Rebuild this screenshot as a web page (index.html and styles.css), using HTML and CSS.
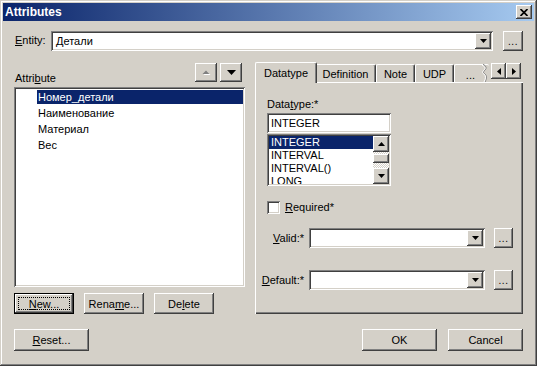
FILE: index.html
```html
<!DOCTYPE html>
<html lang="ru">
  <head>
    <meta charset="UTF-8" />
    <meta name="viewport" content="width=device-width, initial-scale=1" />
    <title>Attributes</title>
    <link rel="stylesheet" href="styles.css">
  </head>
  <body>
    <div class="dialog">
      <div class="titlebar">
        <span class="title">Attributes</span>
        <button class="btn close-btn" aria-label="Close">
          <svg width="8" height="7" viewBox="0 0 8 7"><path d="M0.5 0 L7.5 7 M7.5 0 L0.5 7" stroke="#000" stroke-width="1.7" /></svg>
        </button>
      </div>

      <div class="content">
        <!--—— entity ——-->
        <div class="entity-row">
          <span class="lbl entity-lbl"><u>E</u>ntity:</span>
          <div class="field combo">
            <span class="combo-text">Детали</span>
            <span class="btn drop-btn"><svg width="7" height="4" viewBox="0 0 7 4"><path d="M0 0h7L3.5 4z" /></svg></span>
          </div>
          <button class="btn dots-btn entity-dots">...</button>
        </div>

        <div class="main">
          <!--—— left: attribute list ——-->
          <div class="left">
            <div class="attr-head">
              <span class="lbl">Attri<u>b</u>ute</span>
              <div class="head-btns">
                <button class="btn head-btn" disabled>
                  <svg width="9" height="6" viewBox="0 0 9 6"><path d="M1.5 5h7L5 1.5z" fill="#fff" /><path d="M0.5 4h7L4 0.5z" fill="#808080" /></svg>
                </button>
                <button class="btn head-btn">
                  <svg width="9" height="5" viewBox="0 0 9 5"><path d="M0 0h9L4.5 5z" /></svg>
                </button>
              </div>
            </div>
            <div class="field attr-list">
              <div class="attr-item selected"><span>Номер_детали</span></div>
              <div class="attr-item"><span>Наименование</span></div>
              <div class="attr-item"><span>Материал</span></div>
              <div class="attr-item"><span>Вес</span></div>
            </div>
            <div class="attr-btns">
              <button class="btn push default"><span class="focus"><u>N</u>ew...</span></button>
              <button class="btn push">Rena<u>m</u>e...</button>
              <button class="btn push">De<u>l</u>ete</button>
            </div>
          </div>

          <!--—— right: tabs ——-->
          <div class="right">
            <div class="tabs">
              <div class="tab active">Datatype</div>
              <div class="tab tab-def">Definition</div>
              <div class="tab tab-note">Note</div>
              <div class="tab tab-udp">UDP</div>
              <div class="tab tab-more">
                <span>...</span>
                <svg class="tear" width="7" height="18" viewBox="0 0 7 18"><path d="M1 0 C4 2 5 4 3 6 C1 8 1 9 3 10 C5 12 5 14 3 18" fill="none" stroke="#808080" /><path d="M0 1 C3 3 4 4 2 6 C0 8 0 9 2 10 C4 12 4 14 2 18" fill="none" stroke="#fff" /></svg>
              </div>
              <div class="tab-scroll">
                <button class="btn arrow-btn"><svg width="4" height="7" viewBox="0 0 4 7"><path d="M4 0v7L0 3.5z" /></svg></button>
                <button class="btn arrow-btn"><svg width="4" height="7" viewBox="0 0 4 7"><path d="M0 0v7L4 3.5z" /></svg></button>
              </div>
            </div>

            <div class="tab-panel">
              <span class="lbl">Data<u>t</u>ype:*</span>
              <div class="field dt-input">INTEGER</div>
              <div class="field dt-list">
                <div class="dt-items">
                  <div class="dt-item selected">INTEGER</div>
                  <div class="dt-item">INTERVAL</div>
                  <div class="dt-item">INTERVAL()</div>
                  <div class="dt-item">LONG</div>
                </div>
                <div class="vscroll">
                  <span class="btn sb-btn"><svg width="7" height="4" viewBox="0 0 7 4"><path d="M0 4h7L3.5 0z" /></svg></span>
                  <div class="sb-track"><span class="btn sb-thumb"></span></div>
                  <span class="btn sb-btn"><svg width="7" height="4" viewBox="0 0 7 4"><path d="M0 0h7L3.5 4z" /></svg></span>
                </div>
              </div>

              <div class="check-row">
                <span class="field checkbox"></span>
                <span class="lbl"><u>R</u>equired*</span>
              </div>

              <div class="field-row valid-row">
                <span class="lbl row-lbl"><u>V</u>alid:*</span>
                <div class="field combo small-combo">
                  <span class="combo-text"></span>
                  <span class="btn drop-btn"><svg width="7" height="4" viewBox="0 0 7 4"><path d="M0 0h7L3.5 4z" /></svg></span>
                </div>
                <button class="btn dots-btn">...</button>
              </div>

              <div class="field-row default-row">
                <span class="lbl row-lbl"><u>D</u>efault:*</span>
                <div class="field combo small-combo">
                  <span class="combo-text"></span>
                  <span class="btn drop-btn"><svg width="7" height="4" viewBox="0 0 7 4"><path d="M0 0h7L3.5 4z" /></svg></span>
                </div>
                <button class="btn dots-btn">...</button>
              </div>
            </div>
          </div>
        </div>

        <!--—— footer ——-->
        <div class="footer">
          <button class="btn push wide"><u>R</u>eset...</button>
          <button class="btn push wide ok-btn">OK</button>
          <button class="btn push wide">Cancel</button>
        </div>
      </div>
    </div>
  </body>
</html>
```

FILE: styles.css
```css
/*—— global ——*/
* {
  box-sizing: border-box;
}

body {
  margin: 0;
  background: #d4d0c8;
  font-family: "Liberation Sans", Arial, sans-serif;
  font-size: 11px;
  color: #000;
}

button {
  font: inherit;
  color: inherit;
  padding: 0;
  border: none;
  background: #d4d0c8;
}

u {
  text-underline-offset: 1px;
}

/*—— bevels ——*/
.btn {
  display: flex;
  align-items: center;
  justify-content: center;
  background: #d4d0c8;
  box-shadow: inset -1px -1px #404040, inset 1px 1px #fff,
    inset -2px -2px #808080, inset 2px 2px #d4d0c8;
}

.field {
  background: #fff;
  box-shadow: inset 1px 1px #808080, inset -1px -1px #fff,
    inset 2px 2px #404040, inset -2px -2px #d4d0c8;
}

/*—— window frame ——*/
.dialog {
  width: 537px;
  height: 366px;
  padding: 3px;
  display: flex;
  flex-direction: column;
  background: #d4d0c8;
  box-shadow: inset -1px -1px #404040, inset 1px 1px #d4d0c8,
    inset -2px -2px #808080, inset 2px 2px #fff;
}

.titlebar {
  height: 18px;
  display: flex;
  align-items: center;
  padding: 0 2px;
  background: linear-gradient(to right, #0a246a, #a6caf0);
}

.title {
  color: #fff;
  font-weight: bold;
  font-size: 12px;
}

.close-btn {
  margin-left: auto;
  width: 16px;
  height: 14px;
}

.content {
  flex: 1;
  display: flex;
  flex-direction: column;
  padding: 10px 11px 0;
}

.lbl {
  line-height: 13px;
  white-space: nowrap;
}

/*—— entity row ——*/
.entity-row {
  display: flex;
  align-items: center;
  height: 19px;
}

.entity-lbl {
  width: 37px;
  padding-left: 1px;
}

.combo {
  display: flex;
  align-items: stretch;
  height: 19px;
  padding: 2px;
}

.entity-row .combo {
  flex: 1;
  height: 20px;
}

.combo-text {
  flex: 1;
  padding-left: 3px;
  line-height: 16px;
}

.drop-btn {
  width: 16px;
}

.dots-btn {
  width: 20px;
  height: 20px;
  align-items: flex-end;
  padding-bottom: 4px;
  font-size: 10px;
  letter-spacing: 0.5px;
}

.entity-dots {
  margin-left: 10px;
}

/*—— main area ——*/
.main {
  display: flex;
  gap: 10px;
  margin-top: 12px;
}

.left {
  width: 231px;
  display: flex;
  flex-direction: column;
}

.attr-head {
  height: 25px;
  display: flex;
  align-items: flex-start;
}

.attr-head .lbl {
  margin-top: 10px;
  padding-left: 1px;
}

.head-btns {
  display: flex;
  gap: 3px;
  margin: 1px 3px 0 auto;
}

.head-btn {
  width: 22px;
  height: 19px;
}

.head-btn svg {
  fill: #000;
}

.attr-list {
  height: 200px;
  padding: 2px 2px 0 23px;
}

.attr-item {
  height: 16px;
  display: flex;
  align-items: center;
}

.attr-item span {
  flex: 1;
  line-height: 14px;
  padding-left: 1px;
}

.attr-item.selected span {
  background: #0a246a;
  color: #fff;
}

.attr-btns {
  display: flex;
  gap: 10px;
  margin-top: 6px;
}

.push {
  width: 60px;
  height: 21px;
}

.default {
  border: 1px solid #000;
  padding: 3px;
}

.focus {
  flex: 1;
  align-self: stretch;
  display: flex;
  align-items: center;
  justify-content: center;
  outline: 1px dotted #000;
  outline-offset: -1px;
}

/*—— tabs ——*/
.right {
  width: 268px;
  display: flex;
  flex-direction: column;
}

.tabs {
  height: 20px;
  display: flex;
  align-items: flex-end;
  padding-left: 2px;
}

.tab {
  height: 18px;
  display: flex;
  align-items: center;
  justify-content: center;
  padding-top: 1px;
  border-top: 1px solid #fff;
  border-left: 1px solid #fff;
  border-right: 1px solid #404040;
  border-radius: 2px 2px 0 0;
  box-shadow: inset -1px 0 #808080;
  background: #d4d0c8;
}

.tab.active {
  position: relative;
  z-index: 2;
  width: 62px;
  height: 21px;
  margin: 0 -2px -1px;
  padding-bottom: 2px;
}

.tab-def {
  width: 61px;
}

.tab-note,
.tab-udp {
  width: 39px;
}

.tab-more {
  width: 35px;
  border-right: none;
  box-shadow: none;
  justify-content: flex-end;
  gap: 7px;
  padding-top: 0;
}

.tab-more span {
  padding-top: 2px;
}

.tear {
  margin-top: -1px;
}

.tab-scroll {
  display: flex;
  align-self: flex-start;
  margin: 1px 2px 0 auto;
}

.arrow-btn {
  width: 15px;
  height: 16px;
}

.tab-panel {
  height: 232px;
  display: flex;
  flex-direction: column;
  align-items: flex-start;
  padding: 16px 0 0 12px;
  box-shadow: inset 1px 1px #fff, inset -1px -1px #404040,
    inset -2px -2px #808080;
}

.dt-input {
  width: 124px;
  height: 20px;
  margin-top: 2px;
  padding: 2px 4px;
  line-height: 16px;
}

.dt-list {
  width: 124px;
  height: 52px;
  margin-top: 1px;
  padding: 2px;
  display: flex;
  overflow: hidden;
}

.dt-items {
  flex: 1;
  overflow: hidden;
}

.dt-item {
  height: 13px;
  line-height: 13px;
  padding-left: 2px;
  white-space: nowrap;
}

.dt-item.selected {
  background: #0a246a;
  color: #fff;
}

.vscroll {
  width: 16px;
  display: flex;
  flex-direction: column;
}

.sb-btn {
  height: 16px;
}

.sb-track {
  flex: 1;
  padding-top: 2px;
  background: repeating-conic-gradient(#fff 0 25%, #d4d0c8 0 50%) 0 0 / 2px 2px;
}

.sb-thumb {
  display: block;
  height: 9px;
}

/*—— required / valid / default ——*/
.check-row {
  display: flex;
  align-items: center;
  gap: 5px;
  margin-top: 15px;
}

.checkbox {
  width: 13px;
  height: 13px;
}

.field-row {
  display: flex;
  align-items: center;
  margin-left: -12px;
}

.valid-row {
  margin-top: 14px;
}

.default-row {
  margin-top: 22px;
}

.row-lbl {
  width: 49px;
  text-align: right;
  margin-right: 5px;
}

.small-combo {
  width: 176px;
  height: 20px;
}

.field-row .dots-btn {
  width: 19px;
  margin-left: 9px;
}

/*—— footer ——*/
.footer {
  display: flex;
  gap: 11px;
  margin-top: 15px;
}

.wide {
  width: 75px;
  height: 22px;
}

.ok-btn {
  margin-left: auto;
}
```
